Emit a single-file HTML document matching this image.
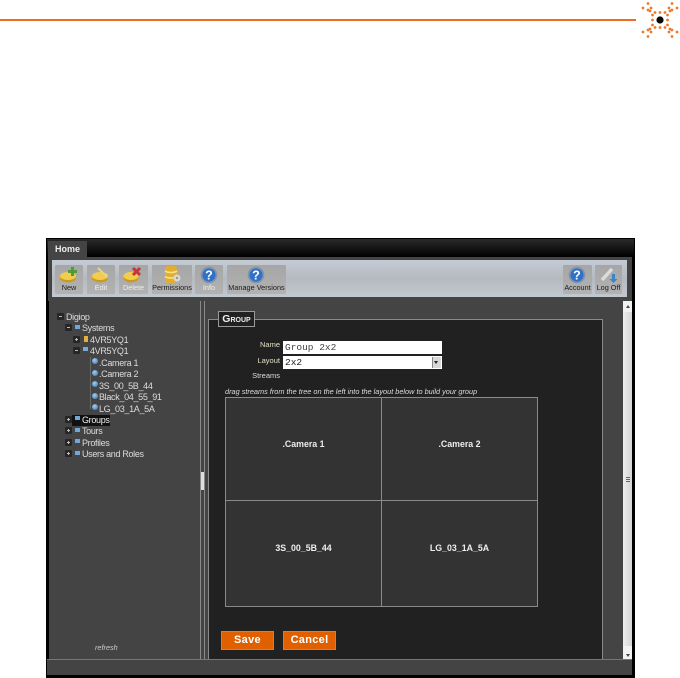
<!DOCTYPE html>
<html><head><meta charset="utf-8"><style>
html,body{margin:0;padding:0;background:#fff;width:680px;height:678px;overflow:hidden}
body{position:relative;font-family:"Liberation Sans",sans-serif}
div,span,svg{position:absolute}
.t{white-space:nowrap;font-size:9px;letter-spacing:-.32px;color:#ddd;line-height:11px}
.b{background:linear-gradient(#a6a6a6,#b2b2b2);top:265px;height:29px;border-radius:1px}
.l{position:absolute;left:0;right:0;bottom:2px;text-align:center;font-size:7.3px;line-height:9px;color:#1c1c1c;white-space:nowrap}
.d{color:#eee}
.g{position:absolute;background:#333;color:#eee;font-weight:bold;font-size:8.8px;line-height:11px;text-align:center;box-sizing:border-box}
.x{width:7px;height:7px;background:#262626;border-radius:1px;margin:-1px 0 0 -1px}
.x:after{content:"";position:absolute;left:2px;top:3px;width:3px;height:1px;background:#bbb}
.p:before{content:"";position:absolute;left:3px;top:2px;width:1px;height:3px;background:#bbb}
.f{width:5px;height:4px;background:#6fa6dc}
.o{width:6px;height:6px;border-radius:50%;background:radial-gradient(circle at 40% 35%,#a8cdea,#2f6fb4)}
.v{background:#8a8a8a}
</style></head><body>
<div style="left:0;top:19px;width:636px;height:2px;background:#e8701e"></div>
<svg style="left:638px;top:0" width="42" height="40" viewBox="-22 -20 42 40">
<circle r="3.6" fill="#0a0a0a"/>
<path fill="none" stroke="#ec7a2c" stroke-width="2.8" stroke-linecap="round" d="M-7.500-5h.01M-7.500 0h.01M-7.500 5h.01M-5-7.500h.01M0-7.500h.01M5-7.500h.01M7.500-5h.01M7.500 0h.01M7.500 5h.01M5 7.500h.01M0 7.500h.01M-5 7.500h.01M-10-9h.01M-9-12h.01M-12-10h.01M-12-16.500h.01M-17-12h.01M10-9h.01M9-12h.01M12-10h.01M12-16.500h.01M17-12h.01M-10 9h.01M-9 12h.01M-12 10h.01M-12 16.500h.01M-17 12h.01M10 9h.01M9 12h.01M12 10h.01M12 16.500h.01M17 12h.01"/>
</svg>

<div style="left:46px;top:238px;width:589px;height:440px;background:#000"></div>
<div style="left:47px;top:239px;width:587px;height:18px;background:linear-gradient(#2a2a2a,#000)"></div>
<div style="left:48px;top:241px;width:39px;height:16px;background:#444"></div>
<div class="t" style="left:55px;top:244px;font-weight:bold;color:#eee;font-size:9px;letter-spacing:0">Home</div>
<div style="left:48px;top:257px;width:584px;height:44px;background:#444"></div>
<div style="left:52px;top:260px;width:575px;height:37px;background:linear-gradient(#c4cbd4,#b4babf 50%,#c2c8d0)"></div>

<div class="b" style="left:55px;width:28px"><svg style="left:4px;top:1px" width="20" height="18" viewBox="0 0 20 18"><ellipse cx="9" cy="12" rx="8" ry="4.500" fill="#c99a20"/><ellipse cx="9" cy="10" rx="8" ry="4" fill="#f2cc4e"/><path d="M12 1h3v3h3v3h-3v3h-3V7H9V4h3z" fill="#4f9a3a"/></svg><div class="l">New</div></div>
<div class="b" style="left:87px;width:28px"><svg style="left:4px;top:1px" width="20" height="18" viewBox="0 0 20 18"><ellipse cx="9" cy="12" rx="8" ry="4.500" fill="#c99a20"/><ellipse cx="9" cy="10" rx="8" ry="4" fill="#f2cc4e"/><path d="M7 2l9 9" stroke="#e6d48a" stroke-width="2"/></svg><div class="l d">Edit</div></div>
<div class="b" style="left:119px;width:29px"><svg style="left:4px;top:1px" width="20" height="18" viewBox="0 0 20 18"><ellipse cx="8" cy="12" rx="7.500" ry="4.500" fill="#c99a20"/><ellipse cx="8" cy="10" rx="7.500" ry="4" fill="#f2cc4e"/><path d="M10 2l7 7M17 2l-7 7" stroke="#c8343c" stroke-width="3"/></svg><div class="l d">Delete</div></div>
<div class="b" style="left:152px;width:40px"><svg style="left:12px;top:0" width="18" height="20" viewBox="0 0 18 20"><rect x="1" y="1" width="12" height="17" rx="3" fill="#e2ae32"/><path d="M1 6c3 2 9 2 12 0M1 11.500c3 2 9 2 12 0" stroke="#fbe28a" stroke-width="1.500" fill="none"/><circle cx="13" cy="13" r="3.500" fill="#d8d8d8"/><circle cx="13" cy="13" r="1.200" fill="#999"/></svg><div class="l">Permissions</div></div>
<div class="b" style="left:195px;width:28px"><svg style="left:5px;top:1px" width="18" height="18" viewBox="0 0 18 18"><circle cx="9" cy="9" r="8.300" fill="#7f93ad"/><circle cx="9" cy="9" r="6.500" fill="#2f70c8"/><text x="9" y="13.500" font-size="12.500" font-weight="bold" text-anchor="middle" fill="#fff" font-family="Liberation Sans">?</text></svg><div class="l d">Info</div></div>
<div class="b" style="left:227px;width:59px"><svg style="left:20px;top:1px" width="18" height="18" viewBox="0 0 18 18"><circle cx="9" cy="9" r="8.300" fill="#7f93ad"/><circle cx="9" cy="9" r="6.500" fill="#2f70c8"/><text x="9" y="13.500" font-size="12.500" font-weight="bold" text-anchor="middle" fill="#fff" font-family="Liberation Sans">?</text></svg><div class="l">Manage Versions</div></div>
<div class="b" style="left:563px;width:29px"><svg style="left:5px;top:1px" width="18" height="18" viewBox="0 0 18 18"><circle cx="9" cy="9" r="8.300" fill="#7f93ad"/><circle cx="9" cy="9" r="6.500" fill="#2f70c8"/><text x="9" y="13.500" font-size="12.500" font-weight="bold" text-anchor="middle" fill="#fff" font-family="Liberation Sans">?</text></svg><div class="l">Account</div></div>
<div class="b" style="left:595px;width:27px"><svg style="left:4px;top:1px" width="20" height="18" viewBox="0 0 20 18"><path d="M3 14L13 3" stroke="#dcdcdc" stroke-width="3.500"/><path d="M13 8v5h-2.500l4 4 4-4H16V8z" fill="#3b82c8"/></svg><div class="l">Log Off</div></div>

<div style="left:49px;top:301px;width:574px;height:358px;background:#444"></div>
<div class="v" style="left:200px;top:301px;width:1px;height:358px"></div>
<div class="v" style="left:204px;top:301px;width:1px;height:358px"></div>
<div style="left:201px;top:472px;width:3px;height:18px;background:#ddd"></div>
<div style="left:209px;top:320px;width:393px;height:339px;background:#212121"></div>
<div class="v" style="left:208px;top:319px;width:1px;height:340px"></div>
<div class="v" style="left:208px;top:319px;width:395px;height:1px"></div>
<div class="v" style="left:602px;top:319px;width:1px;height:340px"></div>
<div style="left:218px;top:311px;width:35px;height:14px;border:1px solid #999;background:#212121;color:#eee;font-weight:bold;font-size:10.500px;line-height:14px;text-align:center;font-variant:small-caps">Group</div>

<!-- tree -->
<div style="left:90px;top:357px;width:1px;height:52px;background:#666"></div>
<div class="x" style="left:58px;top:314px"></div><div class="t" style="left:66px;top:312px">Digiop</div>
<div class="x" style="left:66px;top:325px"></div><div class="f" style="left:75px;top:325px"></div><div class="t" style="left:82px;top:323px">Systems</div>
<div class="x p" style="left:74px;top:337px"></div><div style="left:84px;top:336px;width:4px;height:6px;background:#e2b23c"></div><div class="t" style="left:90px;top:335px">4VR5YQ1</div>
<div class="x" style="left:74px;top:348px"></div><div class="f" style="left:83px;top:347px;background:#7aa8d8"></div><div class="t" style="left:90px;top:346px">4VR5YQ1</div>
<div class="o" style="left:92px;top:358px"></div><div class="t" style="left:99px;top:358px">.Camera 1</div>
<div class="o" style="left:92px;top:370px"></div><div class="t" style="left:99px;top:369px">.Camera 2</div>
<div class="o" style="left:92px;top:381px"></div><div class="t" style="left:99px;top:381px">3S_00_5B_44</div>
<div class="o" style="left:92px;top:393px"></div><div class="t" style="left:99px;top:392px">Black_04_55_91</div>
<div class="o" style="left:92px;top:404px"></div><div class="t" style="left:99px;top:404px">LG_03_1A_5A</div>
<div style="left:72px;top:415px;width:38px;height:11px;background:#111"></div>
<div class="x p" style="left:66px;top:417px"></div><div class="f" style="left:75px;top:416px"></div><div class="t" style="left:82px;top:415px;color:#eee">Groups</div>
<div class="x p" style="left:66px;top:428px"></div><div class="f" style="left:75px;top:428px"></div><div class="t" style="left:82px;top:426px">Tours</div>
<div class="x p" style="left:66px;top:440px"></div><div class="f" style="left:75px;top:439px"></div><div class="t" style="left:82px;top:438px">Profiles</div>
<div class="x p" style="left:66px;top:451px"></div><div class="f" style="left:75px;top:451px"></div><div class="t" style="left:82px;top:449px">Users and Roles</div>
<div class="t" style="left:95px;top:642px;font-style:italic;font-size:7.300px;letter-spacing:0;color:#ccc">refresh</div>

<!-- form -->
<div class="t" style="right:400px;top:339px;font-size:7.500px;letter-spacing:0;color:#e4e0c8">Name</div>
<div class="t" style="right:400px;top:355px;font-size:7.500px;letter-spacing:0;color:#e4e0c8">Layout</div>
<div class="t" style="right:400px;top:370px;font-size:7.500px;letter-spacing:0;color:#ddd">Streams</div>
<div style="left:283px;top:341px;width:159px;height:13px;background:#fff"></div>
<div class="t" style="left:285px;top:342px;font-family:'Liberation Mono',monospace;font-size:9.500px;letter-spacing:0;color:#444">Group 2x2</div>
<div style="left:283px;top:356px;width:159px;height:13px;background:#fff"></div>
<div class="t" style="left:285px;top:357px;font-family:'Liberation Mono',monospace;font-size:9.500px;letter-spacing:0;color:#222">2x2</div>
<div style="left:432px;top:357px;width:9px;height:11px;background:#d8d8d8;border-left:1px solid #888;box-sizing:border-box"></div>
<div style="left:434px;top:361px;width:0;height:0;border-left:2.500px solid transparent;border-right:2.500px solid transparent;border-top:3px solid #222"></div>
<div class="t" style="left:225px;top:386px;font-style:italic;font-size:7.330px;letter-spacing:0;color:#ddd">drag streams from the tree on the left into the layout below to build your group</div>

<div style="left:225px;top:397px;width:313px;height:210px;background:#8a8a8a"></div>
<div class="g" style="left:226px;top:398px;width:155px;height:102px;padding-top:41px">.Camera 1</div>
<div class="g" style="left:382px;top:398px;width:155px;height:102px;padding-top:41px">.Camera 2</div>
<div class="g" style="left:226px;top:501px;width:155px;height:105px;padding-top:42px">3S_00_5B_44</div>
<div class="g" style="left:382px;top:501px;width:155px;height:105px;padding-top:42px">LG_03_1A_5A</div>

<div style="left:221px;top:631px;width:53px;height:19px;background:#e06000;color:#fff;font-weight:bold;font-size:11px;line-height:19px;text-align:center;letter-spacing:.3px;box-shadow:inset 0 0 0 1px #a08c78">Save</div>
<div style="left:283px;top:631px;width:53px;height:19px;background:#e06000;color:#fff;font-weight:bold;font-size:11px;line-height:19px;text-align:center;letter-spacing:.3px;box-shadow:inset 0 0 0 1px #a08c78">Cancel</div>

<!-- scrollbar -->
<div style="left:623px;top:301px;width:9px;height:358px;background:linear-gradient(90deg,#eee,#d4d4d4)"></div>
<div style="left:623px;top:301px;width:9px;height:11px;background:#f2f2f2"></div>
<div style="left:626px;top:305px;width:0;height:0;border-left:2.500px solid transparent;border-right:2.500px solid transparent;border-bottom:3px solid #444"></div>
<div style="left:623px;top:646px;width:9px;height:13px;background:#f2f2f2"></div>
<div style="left:626px;top:654px;width:0;height:0;border-left:2.500px solid transparent;border-right:2.500px solid transparent;border-top:3px solid #444"></div>
<div style="left:626px;top:477px;width:4px;height:1px;background:#666"></div>
<div style="left:626px;top:479px;width:4px;height:1px;background:#666"></div>
<div style="left:626px;top:481px;width:4px;height:1px;background:#666"></div>

<div style="left:47px;top:659px;width:585px;height:1px;background:#777"></div>
<div style="left:47px;top:660px;width:585px;height:15px;background:#444"></div>
</body></html>
